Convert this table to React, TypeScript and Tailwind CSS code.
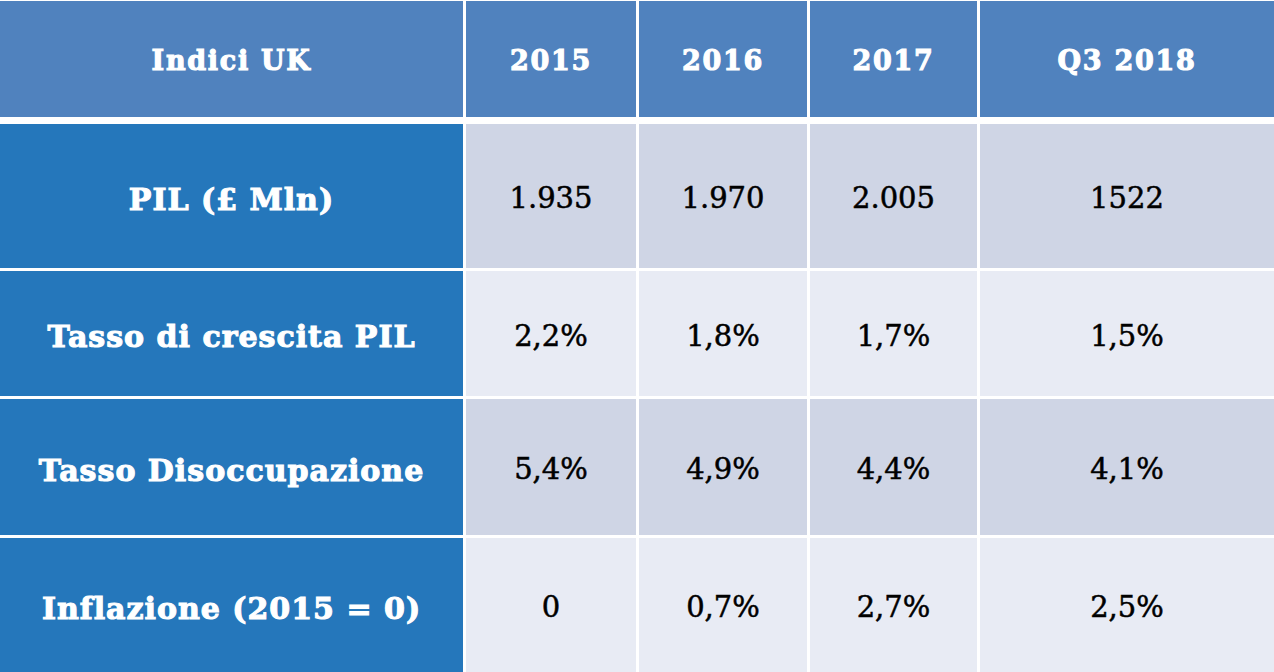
import React from "react";

const cols = "grid grid-cols-[463px_170px_168px_167px_294px] gap-x-[3px]";

const rows: { label: string; vals: string[]; h: string; bg: string }[] = [
  { label: "PIL (£ Mln)", vals: ["1.935", "1.970", "2.005", "1522"], h: "h-[144px]", bg: "bg-[#cfd5e5]" },
  { label: "Tasso di crescita PIL", vals: ["2,2%", "1,8%", "1,7%", "1,5%"], h: "h-[125px]", bg: "bg-[#e8ebf4]" },
  { label: "Tasso Disoccupazione", vals: ["5,4%", "4,9%", "4,4%", "4,1%"], h: "h-[136px]", bg: "bg-[#cfd5e5]" },
  { label: "Inflazione (2015 = 0)", vals: ["0", "0,7%", "2,7%", "2,5%"], h: "h-[134px]", bg: "bg-[#e8ebf4]" },
];

const headFont =
  "font-['DejaVu_Serif',serif] font-bold text-white [-webkit-text-stroke:1.1px_white] [paint-order:stroke_fill]";
const dataFont =
  "font-['DejaVu_Serif',serif] text-black text-[29px] [-webkit-text-stroke:0.5px_black]";

export default function App() {
  return (
    <div className="w-[1274px] h-[672px] bg-white pt-px flex flex-col overflow-hidden">
      <div className={`${cols} h-[116px] mb-[7px]`}>
        {["Indici UK", "2015", "2016", "2017", "Q3 2018"].map((t) => (
          <div
            key={t}
            className={`bg-[#5082be] flex items-center justify-center pt-[4px] text-[27px] tracking-[1.7px] ${headFont}`}
          >
            {t}
          </div>
        ))}
      </div>
      <div className="flex flex-col gap-y-[3px]">
        {rows.map((r) => (
          <div key={r.label} className={`${cols} ${r.h}`}>
            <div
              className={`bg-[#2577bb] flex items-center justify-center pt-[6px] text-[30px] tracking-[1px] ${headFont}`}
            >
              {r.label}
            </div>
            {r.vals.map((v, i) => (
              <div key={i} className={`${r.bg} flex items-center justify-center pt-[6px] ${dataFont}`}>
                {v}
              </div>
            ))}
          </div>
        ))}
      </div>
    </div>
  );
}
